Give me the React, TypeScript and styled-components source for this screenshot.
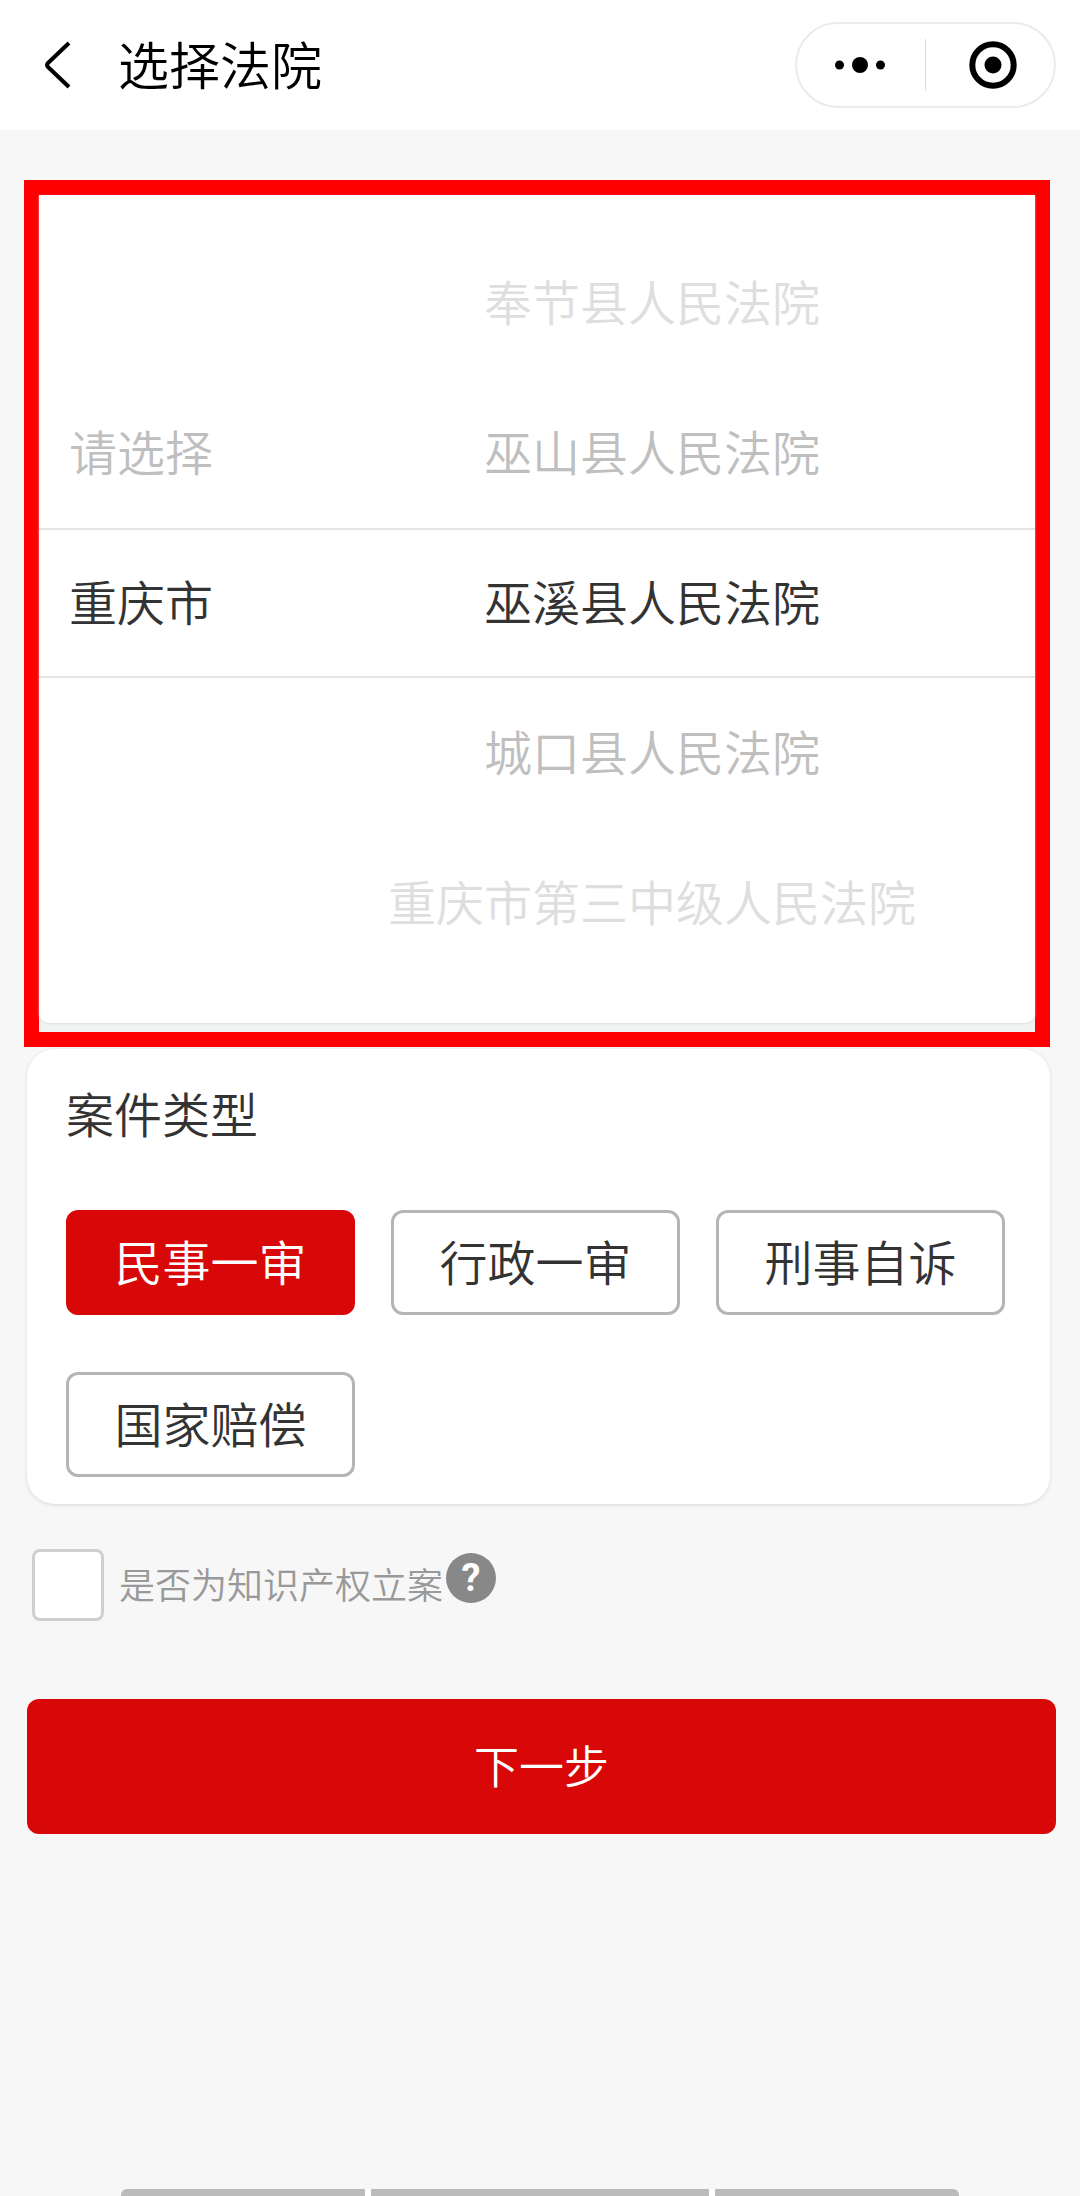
import React, { useState } from "react";
import styled, { createGlobalStyle } from "styled-components";

const GlobalStyle = createGlobalStyle`
  *, *::before, *::after { box-sizing: border-box; }
  body {
    margin: 0;
    background: #f7f7f7;
    color: #333333;
    font-family: "Noto Sans CJK SC", sans-serif;
    font-weight: 350;
  }
  button { font: inherit; color: inherit; padding: 0; border: 0; background: none; cursor: pointer; }
  h1, h2, ul { margin: 0; padding: 0; font-weight: inherit; list-style: none; }
`;

const Page = styled.div`
  display: flex;
  flex-direction: column;
  min-height: 100vh;
`;

const Header = styled.header`
  display: flex;
  align-items: center;
  height: 130px;
  padding: 0 24px 0 30px;
  background: #ffffff;
`;

const BackButton = styled.button`
  display: flex;
  width: 56px;
  height: 64px;
  align-items: center;
  justify-content: center;
`;

const Title = styled.h1`
  flex: 1;
  margin-left: 32px;
  padding-bottom: 4px;
  color: #000000;
  font-size: 51px;
  line-height: 64px;
`;

const Capsule = styled.div`
  display: flex;
  align-items: center;
  width: 261px;
  height: 86px;
  border: 2px solid #ebebeb;
  border-radius: 43px;
`;

const CapsuleButton = styled.button`
  display: flex;
  flex: 1;
  height: 52px;
  padding: 0 4px 0 2px;
  align-items: center;
  justify-content: center;

  & + & {
    padding: 0 0 0 6px;
    border-left: 1px solid #dcdcdc;
  }
`;

const Main = styled.main`
  padding: 50px 24px 0;
`;

const PickerFrame = styled.section`
  margin-right: 6px;
  padding-bottom: 9px;
  border: 15px solid #ff0000;
  background: #f1f3f3;
`;

const Picker = styled.div`
  display: grid;
  grid-template-columns: 3fr 10fr;
  padding: 33px 0 45px;
  border-radius: 0 0 10px 10px;
  background: #ffffff;
  box-shadow: 0 1px 2px #dddddd;
`;

const Column = styled.ul<{ $centered?: boolean }>`
  padding-left: ${(p) => (p.$centered ? "0" : "30px")};
  text-align: ${(p) => (p.$centered ? "center" : "left")};
  background: linear-gradient(#e5e5e5, #e5e5e5) 0 300px / 100% 2px no-repeat,
    linear-gradient(#e5e5e5, #e5e5e5) 0 448px / 100% 2px no-repeat;
`;

const tones = ["#333333", "#bfbfbf", "#dedede"];

const Option = styled.li<{ $distance: number }>`
  height: 150px;
  color: ${(p) => tones[p.$distance]};
  font-size: 48px;
  line-height: 144px;
  white-space: nowrap;
`;

const Card = styled.section`
  margin: 2px 6px 0 3px;
  padding: 29px 45px 27px 39px;
  border-radius: 28px;
  background: #ffffff;
  box-shadow: 0 1px 4px rgba(0, 0, 0, 0.12);
`;

const CardTitle = styled.h2`
  padding-bottom: 4px;
  font-size: 48px;
  line-height: 68px;
`;

const TypeGrid = styled.div`
  display: grid;
  grid-template-columns: repeat(3, 1fr);
  gap: 57px 36px;
  margin-top: 60px;
`;

const TypeButton = styled.button<{ $active: boolean }>`
  height: 105px;
  padding-bottom: 6px;
  border: 3px solid ${(p) => (p.$active ? "#d80808" : "#b5b5b5")};
  border-radius: 12px;
  background: ${(p) => (p.$active ? "#d80808" : "#ffffff")};
  color: ${(p) => (p.$active ? "#ffffff" : "#333333")};
  font-size: 48px;
  line-height: 68px;
`;

const CheckRow = styled.div`
  display: flex;
  align-items: center;
  margin: 45px 8px 0;
`;

const CheckBox = styled.input`
  appearance: none;
  width: 72px;
  height: 72px;
  margin: 0;
  border: 3px solid #cfcfcf;
  border-radius: 8px;
  background: #ffffff;

  &:checked { background: #d80808; }
`;

const CheckLabel = styled.label`
  margin-left: 15px;
  padding-bottom: 4px;
  color: #999999;
  font-size: 36px;
  line-height: 68px;
`;

const HelpButton = styled.button`
  align-self: flex-start;
  width: 50px;
  height: 50px;
  margin: 4px 0 0 3px;
  border-radius: 50%;
  background: #888888;
  color: #ffffff;
  font-family: Roboto, sans-serif;
  font-size: 38px;
  font-weight: 700;
  line-height: 50px;
`;

const NextButton = styled.button`
  display: block;
  width: calc(100% - 3px);
  height: 135px;
  margin: 78px 0 60px 3px;
  padding-bottom: 4px;
  border-radius: 12px;
  background: #d80808;
  color: #ffffff;
  font-size: 45px;
  line-height: 68px;
`;

const BottomBar = styled.footer`
  display: flex;
  gap: 6px;
  height: 7px;
  margin: auto 121px 0;
  border-radius: 6px 6px 0 0;
  overflow: hidden;
  background: #ffffff;
`;

const BarPart = styled.span<{ $share: number }>`
  flex: ${(p) => p.$share};
  background: #bbbbbb;
`;

const regions = ["", "请选择", "重庆市"];
const courts = ["奉节县人民法院", "巫山县人民法院", "巫溪县人民法院", "城口县人民法院", "重庆市第三中级人民法院"];
const caseTypes = ["民事一审", "行政一审", "刑事自诉", "国家赔偿"];
const SELECTED = 2;

function Wheel({ items, label, centered }: { items: string[]; label: string; centered?: boolean }) {
  return (
    <Column role="listbox" aria-label={label} $centered={centered}>
      {items.map((item, i) => (
        <Option
          key={i}
          role={item ? "option" : "presentation"}
          aria-selected={item ? i === SELECTED : undefined}
          $distance={Math.abs(i - SELECTED)}
        >
          {item}
        </Option>
      ))}
    </Column>
  );
}

export default function App() {
  const [caseType, setCaseType] = useState(caseTypes[0]);
  const [isIp, setIsIp] = useState(false);

  return (
    <Page>
      <GlobalStyle />
      <Header>
        <BackButton aria-label="返回">
          <svg width="28" height="48" viewBox="0 0 28 48" fill="none" stroke="#000" strokeWidth="4" strokeLinejoin="round">
            <path d="M25 2 L4 22 Q2 24 4 26 L25 46" />
          </svg>
        </BackButton>
        <Title>选择法院</Title>
        <Capsule>
          <CapsuleButton aria-label="更多">
            <svg width="52" height="18" viewBox="0 0 52 18">
              <circle cx="5.500" cy="9" r="4.500" />
              <circle cx="26" cy="9" r="8" />
              <circle cx="46.500" cy="9" r="4.500" />
            </svg>
          </CapsuleButton>
          <CapsuleButton aria-label="关闭">
            <svg width="48" height="48" viewBox="0 0 48 48">
              <circle cx="24" cy="24" r="20.700" fill="none" stroke="#000" strokeWidth="6" />
              <circle cx="24" cy="24" r="8.500" />
            </svg>
          </CapsuleButton>
        </Capsule>
      </Header>
      <Main>
        <PickerFrame>
          <Picker>
            <Wheel items={regions} label="地区" />
            <Wheel items={courts} label="法院" centered />
          </Picker>
        </PickerFrame>
        <Card>
          <CardTitle>案件类型</CardTitle>
          <TypeGrid>
            {caseTypes.map((type) => (
              <TypeButton
                key={type}
                type="button"
                $active={type === caseType}
                aria-pressed={type === caseType}
                onClick={() => setCaseType(type)}
              >
                {type}
              </TypeButton>
            ))}
          </TypeGrid>
        </Card>
        <CheckRow>
          <CheckBox id="ip" type="checkbox" checked={isIp} onChange={(e) => setIsIp(e.target.checked)} />
          <CheckLabel htmlFor="ip">是否为知识产权立案</CheckLabel>
          <HelpButton type="button">?</HelpButton>
        </CheckRow>
        <NextButton type="button">下一步</NextButton>
      </Main>
      <BottomBar>
        <BarPart $share={13} />
        <BarPart $share={18} />
        <BarPart $share={13} />
      </BottomBar>
    </Page>
  );
}
